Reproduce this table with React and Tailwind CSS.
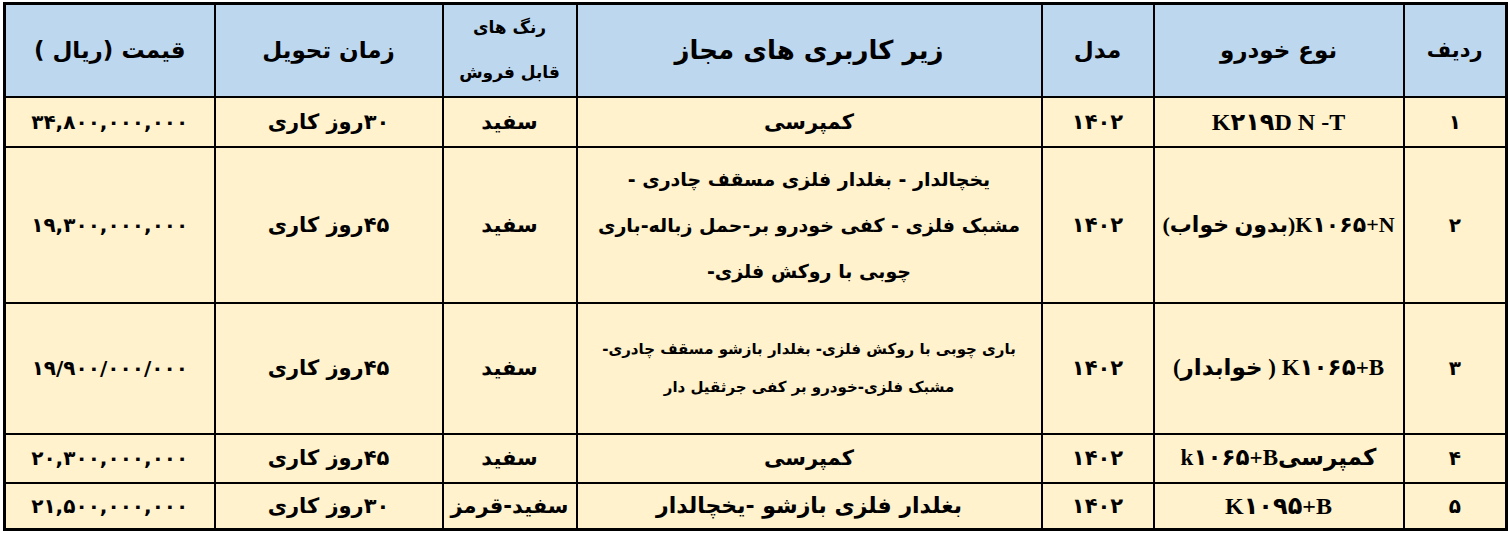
import React from 'react';

const rows = [
  {
    id: '۱',
    car: 'K۲۱۹D N -T',
    carSize: 'text-[24px]',
    usage: ['کمپرسی'],
    usageSize: 'text-[21px] leading-[30px]',
    color: 'سفید',
    time: '۳۰روز کاری',
    price: '۳۴,۸۰۰,۰۰۰,۰۰۰',
    h: 'h-[50px]',
  },
  {
    id: '۲',
    car: 'K۱۰۶۵+N(بدون خواب)',
    carSize: 'text-[22px]',
    usage: [
      'یخچالدار - بغلدار فلزی مسقف چادری -',
      'مشبک فلزی - کفی خودرو بر-حمل زباله-باری',
      'چوبی با روکش فلزی-',
    ],
    usageSize: 'text-[19px] !leading-[46px]',
    color: 'سفید',
    time: '۴۵روز کاری',
    price: '۱۹,۳۰۰,۰۰۰,۰۰۰',
    h: 'h-[156px]',
  },
  {
    id: '۳',
    car: 'K۱۰۶۵+B ( خوابدار)',
    carSize: 'text-[23px]',
    usage: [
      'باری چوبی با روکش فلزی- بغلدار بازشو مسقف چادری-',
      'مشبک فلزی-خودرو بر کفی جرثقیل دار',
    ],
    usageSize: 'text-[15px] !leading-[38px]',
    color: 'سفید',
    time: '۴۵روز کاری',
    price: '۱۹/۹۰۰/۰۰۰/۰۰۰',
    h: 'h-[131px]',
  },
  {
    id: '۴',
    car: 'کمپرسیk۱۰۶۵+B',
    carSize: 'text-[23px]',
    usage: ['کمپرسی'],
    usageSize: 'text-[21px]',
    color: 'سفید',
    time: '۴۵روز کاری',
    price: '۲۰,۳۰۰,۰۰۰,۰۰۰',
    h: 'h-[49px]',
  },
  {
    id: '۵',
    car: 'K۱۰۹۵+B',
    carSize: 'text-[24px]',
    usage: ['بغلدار فلزی بازشو -یخچالدار'],
    usageSize: 'text-[22px]',
    color: 'سفید-قرمز',
    time: '۳۰روز کاری',
    price: '۲۱,۵۰۰,۰۰۰,۰۰۰',
    h: 'h-[47px]',
  },
];

const td = 'border-2 border-black text-center align-middle font-bold text-black whitespace-nowrap p-0 leading-[30px]';

function App() {
  return (
    <div className="w-[1510px] h-[533px] bg-white pt-[2px] pl-[3px] font-['DejaVu_Sans',sans-serif]">
      <table dir="rtl" className="w-[1502px] table-fixed border-collapse border-[3px] border-black">
        <colgroup>
          <col className="w-[103px]" />
          <col className="w-[250px]" />
          <col className="w-[112px]" />
          <col className="w-[465px]" />
          <col className="w-[134px]" />
          <col className="w-[228px]" />
          <col className="w-[210px]" />
        </colgroup>
        <thead>
          <tr className="h-[93px] bg-[#bdd7ee]">
            <th className={`${td} text-[21px]`}>ردیف</th>
            <th className={`${td} text-[23px]`}>نوع خودرو</th>
            <th className={`${td} text-[23px]`}>مدل</th>
            <th className={`${td} text-[26px]`}>زیر کاربری های مجاز</th>
            <th className={`${td} text-[17px] !leading-[45px]`}>
              رنگ های
              <br />
              قابل فروش
            </th>
            <th className={`${td} text-[23px]`}>زمان تحویل</th>
            <th className={`${td} text-[23px]`}>قیمت (ریال )</th>
          </tr>
        </thead>
        <tbody>
          {rows.map((r) => (
            <tr key={r.id} className={`${r.h} bg-[#fff2cc]`}>
              <td className={`${td} text-[20px]`}>{r.id}</td>
              <td className={`${td} ${r.carSize} font-['Liberation_Serif','DejaVu_Sans',serif]`}>{r.car}</td>
              <td className={`${td} text-[21px]`}>۱۴۰۲</td>
              <td className={`${td} ${r.usageSize}`}>
                {r.usage.map((line, i) => (
                  <div key={i}>{line}</div>
                ))}
              </td>
              <td className={`${td} text-[21px]`}>{r.color}</td>
              <td className={`${td} text-[21px]`}>{r.time}</td>
              <td className={`${td} text-[20px]`}>{r.price}</td>
            </tr>
          ))}
        </tbody>
      </table>
    </div>
  );
}

export default App;
